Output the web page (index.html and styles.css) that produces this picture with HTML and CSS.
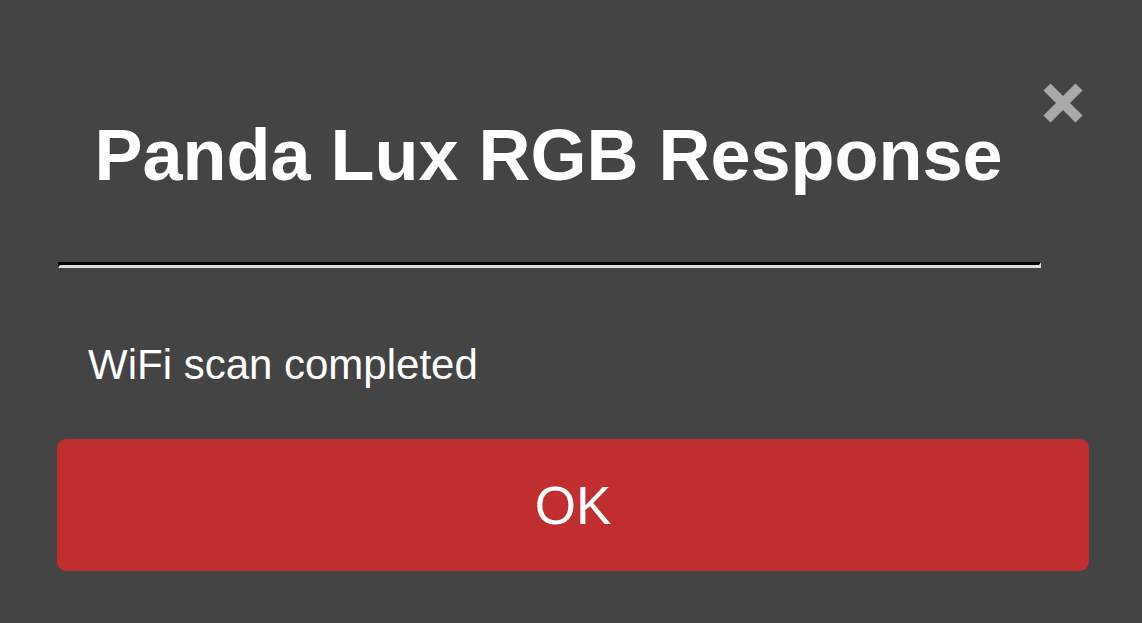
FILE: index.html
```html
<!DOCTYPE html>
<html>
<head>
<meta charset="utf-8">
<link rel="stylesheet" href="styles.css">
</head>
<body>
<div class="dialog">
  <div class="header">
    <h1 class="title">Panda Lux RGB Response</h1>
    <button class="close" aria-label="Close">
      <svg width="40" height="40" viewBox="0 0 40 40"><path d="M4 4 L36 36 M36 4 L4 36" stroke="#a9a9a9" stroke-width="10" stroke-linecap="butt" fill="none"/></svg>
    </button>
  </div>
  <hr class="rule">
  <p class="message">WiFi scan completed</p>
  <button class="ok">OK</button>
</div>
</body>
</html>
```
FILE: styles.css
```css
html, body {
  margin: 0;
  padding: 0;
  background: #444444;
  height: 100%;
}
body {
  font-family: "Liberation Sans", Arial, sans-serif;
  color: #ffffff;
}
.dialog {
  position: relative;
  padding: 114px 53px 0 57px;
}
.header {
  width: 983px;
}
.title {
  margin: 0;
  font-size: 72px;
  line-height: 82px;
  font-weight: bold;
  text-align: center;
}
.close {
  position: absolute;
  left: 1043px;
  top: 83px;
  padding: 0;
  margin: 0;
  border: 0;
  background: transparent;
  width: 40px;
  height: 40px;
  line-height: 0;
}
.rule {
  box-sizing: border-box;
  width: 983px;
  height: 6px;
  margin: 66px 0 0 1px;
  border-style: solid;
  border-width: 3px 2px;
  border-color: #000000 #dddddd #dddddd #000000;
}
.message {
  margin: 73px 0 0 31px;
  font-size: 42px;
  line-height: 48px;
}
.ok {
  display: block;
  margin-top: 50px;
  width: 1032px;
  height: 132px;
  border: 0;
  border-radius: 9px;
  background: #c02e30;
  color: #ffffff;
  font-family: "Liberation Sans", Arial, sans-serif;
  font-size: 53px;
  padding: 0;
}
```
